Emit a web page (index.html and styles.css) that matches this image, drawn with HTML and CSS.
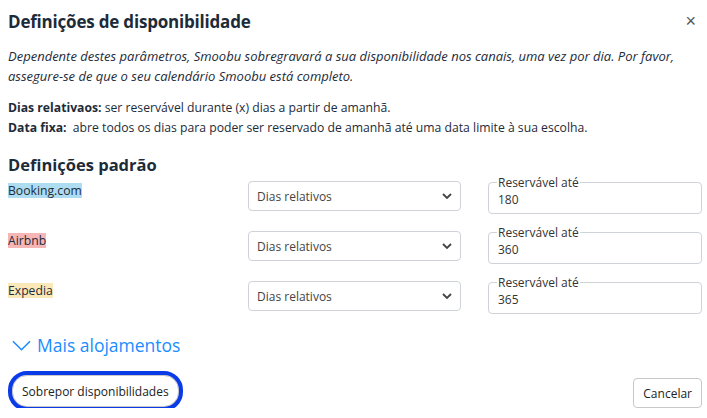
FILE: index.html
```html
<!DOCTYPE html>
<html lang="pt">
<head>
  <meta charset="UTF-8" />
  <title>Definições de disponibilidade</title>
  <link rel="stylesheet" href="styles.css">
</head>
<body>

  <div class="modal">
    <header class="modal-head">
      <h1>Definições de disponibilidade</h1>
      <button class="close" aria-label="Fechar">&times;</button>
    </header>

    <p class="intro">Dependente destes parâmetros, Smoobu sobregravará a sua disponibilidade nos canais, uma vez por dia. Por favor, assegure-se de que o seu calendário Smoobu está completo.</p>

    <p class="legend">
      <b>Dias relativaos:</b> ser reservável durante (x) dias a partir de amanhã.<br>
      <b>Data fixa:</b>&nbsp; abre todos os dias para poder ser reservado de amanhã até uma data limite à sua escolha.
    </p>

    <h2>Definições padrão</h2>

    <div class="channels">
      <div class="row">
        <span class="channel booking">Booking.com</span>
        <div class="select">Dias relativos <svg viewBox="0 0 10 6" width="10" height="6"><path d="M1 1l4 4 4-4" fill="none" stroke="#444" stroke-width="1.8"/></svg></div>
        <fieldset class="field"><legend>Reservável até</legend><span class="value">180</span></fieldset>
      </div>
      <div class="row">
        <span class="channel airbnb">Airbnb</span>
        <div class="select">Dias relativos <svg viewBox="0 0 10 6" width="10" height="6"><path d="M1 1l4 4 4-4" fill="none" stroke="#444" stroke-width="1.8"/></svg></div>
        <fieldset class="field"><legend>Reservável até</legend><span class="value">360</span></fieldset>
      </div>
      <div class="row">
        <span class="channel expedia">Expedia</span>
        <div class="select">Dias relativos <svg viewBox="0 0 10 6" width="10" height="6"><path d="M1 1l4 4 4-4" fill="none" stroke="#444" stroke-width="1.8"/></svg></div>
        <fieldset class="field"><legend>Reservável até</legend><span class="value">365</span></fieldset>
      </div>
    </div>

    <a class="more" href="#"><svg viewBox="0 0 20 11" width="19" height="11"><path d="M1 1l9 9 9-9" fill="none" stroke="#1a8cff" stroke-width="1.6"/></svg>Mais alojamentos</a>

    <footer class="modal-foot">
      <button class="btn btn-focus">Sobrepor disponibilidades</button>
      <button class="btn">Cancelar</button>
    </footer>
  </div>

</body>
</html>
```
FILE: styles.css
```css
body {
  font-family: 'Open Sans', Arial, sans-serif;
  margin: 0;
  padding: 0;
  color: #1d2b39;
  background: white;
}

.modal {
  padding: 0 5px 0 8px;
}

.modal-head {
  display: flex;
  justify-content: space-between;
  align-items: center;
  height: 42px;
}

h1 {
  font-size: 17px;
  font-weight: 700;
  margin: 0;
  letter-spacing: -0.2px;
}

.close {
  background: none;
  border: none;
  font-size: 18px;
  color: #555;
  padding: 0 6px;
  cursor: pointer;
}

.intro {
  font-style: italic;
  font-size: 13px;
  line-height: 20px;
  margin: 4px 0 0;
}

.legend {
  font-size: 12.2px;
  line-height: 20px;
  margin: 12px 0 0;
}

h2 {
  font-size: 16.5px;
  font-weight: 700;
  margin: 15px 0 0;
}

.row {
  display: grid;
  grid-template-columns: 240px 213px 1fr;
  align-items: start;
  height: 50px;
}

.channel {
  justify-self: start;
  font-size: 12.2px;
  line-height: 15px;
  margin-top: 7px;
}

.booking { background: #aedcf0; }
.airbnb { background: #f6b6b6; }
.expedia { background: #fbe8b8; }

.select {
  display: flex;
  justify-content: space-between;
  align-items: center;
  height: 30px;
  margin-top: 5px;
  box-sizing: border-box;
  border: 1px solid #cfd2d8;
  border-radius: 4px;
  padding: 0 8px;
  font-size: 12px;
  color: #444;
}

.field {
  margin: 0 0 0 27px;
  height: 38px;
  box-sizing: border-box;
  border: 1px solid #cfd2d8;
  border-radius: 4px;
  padding: 0 8px 0 9px;
  font-size: 12px;
  color: #333;
}

.field legend {
  padding: 0 1px;
  margin-left: -1px;
  font-size: 12px;
  line-height: 13px;
  color: #333;
}

.value {
  display: block;
  line-height: 15px;
  margin-top: 3px;
}

.more {
  display: flex;
  align-items: center;
  gap: 6px;
  margin-top: 7px;
  padding-left: 4px;
  font-size: 17.5px;
  color: #1a8cff;
  text-decoration: none;
}

.modal-foot {
  display: flex;
  justify-content: space-between;
  align-items: flex-end;
  margin-top: 18px;
}

.btn {
  font-family: inherit;
  font-size: 12px;
  color: #222;
  background: white;
  border: 1px solid #c8c8c8;
  border-radius: 4px;
  height: 30px;
  padding: 0 9px;
  cursor: pointer;
}

.btn-focus {
  margin-left: 4px;
  margin-bottom: 1px;
  height: 32px;
  border-radius: 15px;
  outline: 4px solid #0a3be8;
  outline-offset: 0;
  box-shadow: 0 1px 3px rgba(0,0,0,0.4);
}
```
